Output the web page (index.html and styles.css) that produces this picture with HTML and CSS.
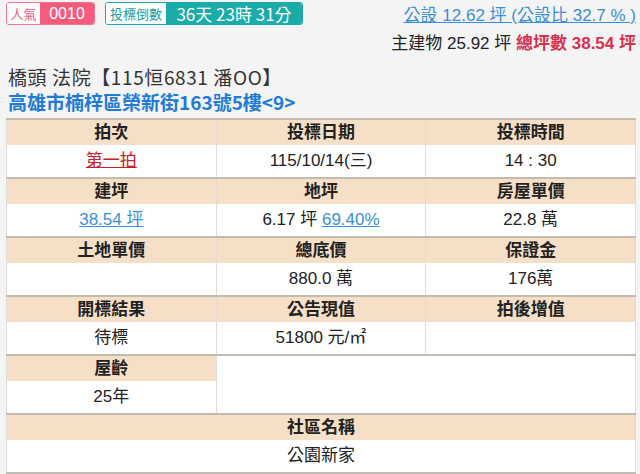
FILE: index.html
```html
<!DOCTYPE html>
<html lang="zh-Hant">
<head>
<meta charset="utf-8">
<link rel="stylesheet" href="styles.css">
</head>
<body>
<div class="top">
  <div class="badges">
    <div class="badge pink"><span class="lab">人氣</span><span class="val">0010</span></div>
    <div class="badge teal"><span class="lab">投標倒數</span><span class="val">36天 23時 31分</span></div>
  </div>
  <div class="sums">
    <div class="line1"><a class="link">公設 12.62 坪 (公設比 32.7 % )</a></div>
    <div class="line2">主建物 25.92 坪 <span class="total">總坪數 38.54 坪</span></div>
  </div>
</div>
<div class="title">橋頭 法院【115恒6831 潘OO】</div>
<div class="addr">高雄市楠梓區榮新街163號5樓&lt;9&gt;</div>
<table class="info">
  <tr class="hd"><th>拍次</th><th>投標日期</th><th>投標時間</th></tr>
  <tr class="vl"><td><a class="red">第一拍</a></td><td>115/10/14(三)</td><td>14 : 30</td></tr>
  <tr class="hd"><th>建坪</th><th>地坪</th><th>房屋單價</th></tr>
  <tr class="vl"><td><a class="blue">38.54 坪</a></td><td>6.17 坪 <a class="blue">69.40%</a></td><td>22.8 萬</td></tr>
  <tr class="hd"><th>土地單價</th><th>總底價</th><th>保證金</th></tr>
  <tr class="vl"><td></td><td>880.0 萬</td><td>176萬</td></tr>
  <tr class="hd"><th>開標結果</th><th>公告現值</th><th>拍後增值</th></tr>
  <tr class="vl"><td>待標</td><td>51800 元/㎡</td><td></td></tr>
  <tr class="hd"><th>屋齡</th><td class="blank" colspan="2" rowspan="2"></td></tr>
  <tr class="vl"><td>25年</td></tr>
  <tr class="hd"><th colspan="3">社區名稱</th></tr>
  <tr class="vl"><td colspan="3">公園新家</td></tr>
</table>
</body>
</html>
```
FILE: styles.css
```css
html, body {
  margin: 0;
  background: #f4f4f4;
}
body {
  padding: 2px 4px 0 6px;
  font-family: "Liberation Sans", "Noto Sans CJK TC", sans-serif;
  color: #222;
}
.top {
  display: flex;
  justify-content: space-between;
  align-items: flex-start;
  height: 58px;
}
.badges {
  display: flex;
  gap: 10px;
}
.badge {
  display: flex;
  height: 23px;
  box-sizing: border-box;
  border-radius: 3px;
  overflow: hidden;
  font-family: "Noto Sans CJK TC", sans-serif;
}
.badge .lab {
  background: #fff;
  font-size: 13px;
  line-height: 21px;
  text-align: center;
  white-space: nowrap;
}
.badge .val {
  color: #fff;
  line-height: 21px;
  text-align: center;
  white-space: nowrap;
}
.badge.pink { border: 1px solid #f4758f; }
.badge.pink .lab { color: #f0607e; width: 33px; }
.badge.pink .val { background: #f65a7c; width: 54px; font-size: 16px; font-family: "Liberation Sans", sans-serif; }
.badge.teal { border: 1px solid #1fa9a6; }
.badge.teal .lab { color: #19a09e; width: 60px; }
.badge.teal .val { background: #1aaca9; width: 136px; font-size: 17px; }
.sums {
  text-align: right;
  font-size: 17px;
  line-height: 28px;
}
.link {
  color: #3b8fd8;
  text-decoration: underline;
}
.total {
  color: #d8304f;
  font-weight: bold;
}
.title {
  margin-top: 4px;
  font-family: "Noto Sans CJK TC", sans-serif;
  font-size: 19px;
  letter-spacing: 0.6px;
  line-height: 25px;
  color: #333;
  padding-left: 2px;
}
.addr {
  font-family: "Noto Sans CJK TC", sans-serif;
  font-size: 19px;
  line-height: 25px;
  color: #1f7bd6;
  font-weight: bold;
  padding-left: 2px;
}
.info {
  margin-top: 4px;
  width: 630px;
  border-collapse: collapse;
  table-layout: fixed;
  font-family: "Liberation Sans", "Noto Sans CJK TC", sans-serif;
  font-size: 17px;
  border-left: 1px solid #bdb3a6;
  border-right: 1px solid #bdb3a6;
  border-bottom: 2px solid #c4bbb0;
}
.info th, .info td {
  text-align: center;
  padding: 0;
  border-left: 1px solid #e4dcd3;
  border-right: 1px solid #e4dcd3;
}
.info tr.hd th, .info tr.hd td {
  border-top: 2px solid #c4bbb0;
  height: 25px;
  line-height: 25px;
}
.info tr.hd th {
  background: #f5dfc7;
  color: #222;
  font-weight: bold;
}
.info tr.vl td {
  background: #fff;
  height: 32px;
  line-height: 32px;
}
.info td.blank {
  background: #fff;
}
.red {
  color: #c8202a;
  text-decoration: underline;
}
.blue {
  color: #3a8fd8;
  text-decoration: underline;
}
```
